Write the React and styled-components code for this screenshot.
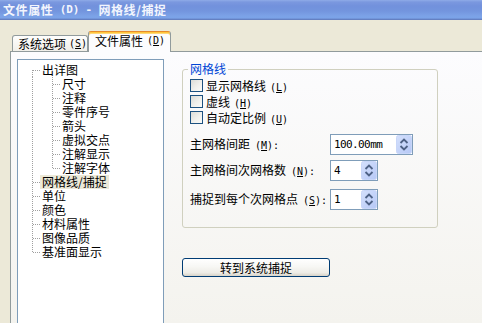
import React from 'react';
import styled, { createGlobalStyle } from 'styled-components';

const Global = createGlobalStyle`
  html, body { margin: 0; padding: 0; background: #ece9d8; }
  body {
    font-family: "Noto Sans CJK SC", "Liberation Sans", sans-serif;
    font-size: 12px;
    color: #000;
  }
  * { box-sizing: border-box; }
`;

const Window = styled.div`
  width: 482px;
  height: 323px;
  overflow: hidden;
  display: flex;
  flex-direction: column;
  background: #ece9d8;
`;

const TitleBar = styled.div`
  flex: none;
  height: 20px;
  display: flex;
  align-items: center;
  padding-left: 3px;
  background: linear-gradient(
    to bottom,
    #8fabe8 0px,
    #7b98df 2px,
    #7291dc 6px,
    #7395de 11px,
    #7ca2e7 16px,
    #7ba3e8 18px,
    #6a88cc 19px,
    #5e78b8 20px
  );
  color: #f2f5fd;
  font-weight: bold;
  font-size: 12px;
  line-height: 14px;
  letter-spacing: 0.6px;
  white-space: nowrap;
`;

const TitleMono = styled.span`
  font-family: "DejaVu Sans Mono", "Liberation Mono", monospace;
  font-size: 11px;
  letter-spacing: -0.2px;
  white-space: pre;
`;

const Client = styled.div`
  flex: 1;
  display: flex;
  flex-direction: column;
  padding: 11px 0 0 10px;
  min-height: 0;
`;

const TabStrip = styled.div`
  flex: none;
  height: 20px;
  display: flex;
  align-items: flex-end;
  padding-left: 2px;
`;

const Tab = styled.div`
  flex: none;
  display: flex;
  align-items: center;
  white-space: nowrap;
  line-height: 14px;
  border: 1px solid #919b9c;
  border-bottom: none;
  border-radius: 3px 3px 0 0;
  width: ${(p) => (p.$active ? 83 : 76)}px;
  height: ${(p) => (p.$active ? 21 : 16)}px;
  padding-left: ${(p) => (p.$active ? 6 : 5)}px;
  padding-bottom: ${(p) => (p.$active ? 2 : 0)}px;
  background: ${(p) =>
    p.$active ? '#fcfcfe' : 'linear-gradient(to bottom, #fefefd, #f0efe9)'};
  ${(p) =>
    p.$active &&
    `
    position: relative;
    z-index: 1;
    margin-bottom: -1px;
    border-top: 1px solid #e68b2c;
    box-shadow: inset 0 1px 0 #ffc73c, inset 0 2px 0 #ffd77a;
  `}
`;

const TabPage = styled.div`
  flex: 1;
  min-height: 0;
  display: flex;
  align-items: flex-start;
  padding: 7px 0 0 6px;
  border-top: 1px solid #919b9c;
  border-left: 1px solid #919b9c;
  background: linear-gradient(to bottom, #fcfcfe, #f4f3ee);
`;

const TreeBox = styled.div`
  flex: none;
  width: 147px;
  height: 280px;
  border: 1px solid #7f9db9;
  background: #fff;
  padding: 3px 0 0 3px;
  display: flex;
  flex-direction: column;
`;

const TreeRow = styled.div`
  display: flex;
  height: 14px;
  align-items: stretch;
`;

const GuideSvg = styled.svg`
  flex: none;
  display: block;
  line {
    stroke: #a0a0a0;
    stroke-width: 1;
    stroke-dasharray: 1 1;
    shape-rendering: crispEdges;
  }
`;

const TreeLabel = styled.span`
  padding: 0 2px;
  margin-left: -1px;
  line-height: 14px;
  height: 14px;
  white-space: nowrap;
  background: ${(p) => (p.$selected ? '#ece9d8' : 'transparent')};
`;

const Right = styled.div`
  flex: none;
  display: flex;
  flex-direction: column;
  align-items: flex-start;
  margin-left: 18px;
  padding-top: 3px;
`;

const GroupBox = styled.fieldset`
  margin: 0;
  width: 256px;
  min-width: 0;
  border: 1px solid #d0d0bf;
  border-radius: 3px;
  padding: 3px 7px 17px 7px;
`;

const Legend = styled.legend`
  color: #0046d5;
  padding: 0 2px;
  margin-left: -2px;
  line-height: 14px;
  font-size: 12px;
`;

const Stack = styled.div`
  display: flex;
  flex-direction: column;
`;

const CheckRow = styled.label`
  display: flex;
  align-items: flex-start;
  height: 16px;
  gap: 3px;
  line-height: 13px;
  white-space: nowrap;
`;

const CheckBox = styled.span`
  flex: none;
  width: 13px;
  height: 13px;
  border: 1px solid #1c5180;
  background: linear-gradient(135deg, #dcdcd7 0%, #f0f0ec 55%, #fbfbf9 100%);
`;

const Hot = styled.span`
  margin-left: ${(p) => p.$space}px;
  font-family: "DejaVu Sans Mono", "Liberation Mono", monospace;
  font-size: 10px;
  white-space: pre;
  u {
    text-decoration: underline;
    text-underline-offset: 1px;
  }
`;

const FieldRow = styled.div`
  display: flex;
  align-items: center;
  height: 21px;
  margin-top: ${(p) => p.$gap}px;
  white-space: nowrap;
`;

const FieldLabel = styled.span`
  flex: none;
  width: 140px;
  line-height: 14px;
`;

const Spin = styled.div`
  flex: none;
  display: flex;
  align-items: stretch;
  width: ${(p) => p.$width}px;
  height: 21px;
  border: 1px solid #7f9db9;
  background: #fff;
`;

const SpinValue = styled.span`
  flex: 1;
  display: flex;
  align-items: center;
  padding-left: 3px;
  font-family: "DejaVu Sans Mono", "Liberation Mono", monospace;
  font-size: 11px;
  letter-spacing: -0.6px;
  color: #000;
`;

const SpinButtons = styled.svg`
  flex: none;
  display: block;
`;

const PushButton = styled.button`
  margin-top: 30px;
  width: 148px;
  height: 19px;
  padding: 0;
  border: 1px solid #003c74;
  border-radius: 3px;
  background: linear-gradient(
    to bottom,
    #ffffff 0%,
    #f7f7f4 45%,
    #eeede7 80%,
    #d8d3c8 100%
  );
  font-family: "Noto Sans CJK SC", sans-serif;
  font-size: 12px;
  line-height: 14px;
  color: #000;
`;

const Accel = ({ k, colon, space = 4 }) => (
  <Hot $space={space}>
    {'('}
    <u>{k}</u>
    {')' + (colon ? ':' : '')}
  </Hot>
);

const Guide = ({ kind }) => (
  <GuideSvg width="20" height="14" viewBox="0 0 20 14">
    {kind !== 'blank' && (
      <line
        x1="11.5"
        x2="11.5"
        y1={kind === 'first' ? 7 : 0}
        y2={kind === 'last' ? 8 : 14}
      />
    )}
    {(kind === 'tee' || kind === 'first' || kind === 'last') && (
      <line x1="12" x2="20" y1="7.5" y2="7.5" />
    )}
  </GuideSvg>
);

const SpinArrows = () => (
  <SpinButtons width="16" height="19" viewBox="0 0 16 19">
    <defs>
      <linearGradient id="spg" x1="0" y1="0" x2="1" y2="1">
        <stop offset="0" stopColor="#d4e0fc" />
        <stop offset="1" stopColor="#b6c8f6" />
      </linearGradient>
    </defs>
    <rect x="0.5" y="0.5" width="15" height="18" rx="2" fill="url(#spg)" stroke="#c8d6f8" />
    <path d="M4.5 8 L8 4.5 L11.5 8" fill="none" stroke="#4d6185" strokeWidth="1.8" />
    <path d="M4.5 11 L8 14.5 L11.5 11" fill="none" stroke="#4d6185" strokeWidth="1.8" />
  </SpinButtons>
);

const tree = [
  {
    label: '出详图',
    children: ['尺寸', '注释', '零件序号', '箭头', '虚拟交点', '注解显示', '注解字体'],
  },
  { label: '网格线/捕捉', selected: true },
  { label: '单位' },
  { label: '颜色' },
  { label: '材料属性' },
  { label: '图像品质' },
  { label: '基准面显示' },
];

const flatRows = [];
tree.forEach((node, i) => {
  const last = i === tree.length - 1;
  const kind = i === 0 ? 'first' : last ? 'last' : 'tee';
  flatRows.push({ label: node.label, selected: node.selected, guides: [kind] });
  (node.children || []).forEach((c, j) => {
    const lastChild = j === node.children.length - 1;
    flatRows.push({
      label: c,
      guides: [last ? 'blank' : 'pipe', lastChild ? 'last' : 'tee'],
    });
  });
});

const checks = [
  { text: '显示网格线', k: 'L' },
  { text: '虚线', k: 'H' },
  { text: '自动定比例', k: 'U' },
];

const fields = [
  { text: '主网格间距', k: 'M', value: '100.00mm', width: 83, gap: 7 },
  { text: '主网格间次网格数', k: 'N', value: '4', width: 48, gap: 5 },
  { text: '捕捉到每个次网格点', k: 'S', value: '1', width: 48, gap: 8 },
];

export default function App() {
  return (
    <Window>
      <Global />
      <TitleBar>
        文件属性<TitleMono> (D) - </TitleMono>网格线/捕捉
      </TitleBar>
      <Client>
        <TabStrip>
          <Tab>
            系统选项
            <Accel k="S" space={3} />
          </Tab>
          <Tab $active>
            文件属性
            <Accel k="D" space={4} />
          </Tab>
        </TabStrip>
        <TabPage>
          <TreeBox>
            {flatRows.map((r, i) => (
              <TreeRow key={i}>
                {r.guides.map((g, j) => (
                  <Guide key={j} kind={g} />
                ))}
                <TreeLabel $selected={r.selected}>{r.label}</TreeLabel>
              </TreeRow>
            ))}
          </TreeBox>
          <Right>
            <GroupBox>
              <Legend>网格线</Legend>
              <Stack>
                {checks.map((c) => (
                  <CheckRow key={c.k}>
                    <CheckBox />
                    <span>
                      {c.text}
                      <Accel k={c.k} />
                    </span>
                  </CheckRow>
                ))}
              </Stack>
              <Stack>
                {fields.map((f) => (
                  <FieldRow key={f.k} $gap={f.gap}>
                    <FieldLabel>
                      {f.text}
                      <Accel k={f.k} colon space={5} />
                    </FieldLabel>
                    <Spin $width={f.width}>
                      <SpinValue>{f.value}</SpinValue>
                      <SpinArrows />
                    </Spin>
                  </FieldRow>
                ))}
              </Stack>
            </GroupBox>
            <PushButton type="button">转到系统捕捉</PushButton>
          </Right>
        </TabPage>
      </Client>
    </Window>
  );
}
